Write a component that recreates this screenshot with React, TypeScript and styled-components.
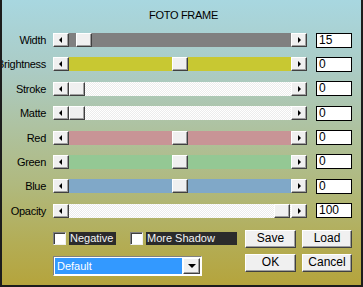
import React from "react";
import styled, { createGlobalStyle } from "styled-components";

const GlobalStyle = createGlobalStyle`
  html, body {
    margin: 0;
    padding: 0;
    background: #1a1a1a;
  }
  body {
    font-family: "Liberation Sans", Arial, sans-serif;
    font-size: 11px;
  }
`;

interface sliderProps {
  label: string;
  value: string;
  pos: number;
  track: string;
  dither?: boolean;
}

const sliders: sliderProps[] = [
  { label: "Width", value: "15", pos: 7, track: "#808080" },
  { label: "Brightness", value: "0", pos: 103, track: "#c8c832" },
  { label: "Stroke", value: "0", pos: 0, track: "#f6f6f6", dither: true },
  { label: "Matte", value: "0", pos: 0, track: "#f6f6f6", dither: true },
  { label: "Red", value: "0", pos: 103, track: "#c89496" },
  { label: "Green", value: "0", pos: 103, track: "#94c894" },
  { label: "Blue", value: "0", pos: 103, track: "#80a8c8" },
  { label: "Opacity", value: "100", pos: 205, track: "#f6f6f6", dither: true },
];

const App = () => {
  return (
    <>
      <GlobalStyle />
      <Frame>
        <Title>FOTO FRAME</Title>
        <Rows>
          {sliders.map((s) => (
            <Row key={s.label}>
              <Label>
                <span>{s.label}</span>
              </Label>
              <Scrollbar>
                <ArrowButton>
                  <LeftTri />
                </ArrowButton>
                <Track $color={s.track} $dither={!!s.dither}>
                  <Thumb style={{ marginLeft: s.pos }} />
                </Track>
                <ArrowButton>
                  <RightTri />
                </ArrowButton>
              </Scrollbar>
              <ValueBox>{s.value}</ValueBox>
            </Row>
          ))}
        </Rows>
        <Bottom>
          <LeftCol>
            <CheckRow>
              <CheckBox />
              <CheckLabel $width={46}>Negative</CheckLabel>
              <CheckBox $gap={14} />
              <CheckLabel $width={90}>More Shadow</CheckLabel>
            </CheckRow>
            <Combo>
              <ComboField>Default</ComboField>
              <ComboButton>
                <DownTri />
              </ComboButton>
            </Combo>
          </LeftCol>
          <Buttons>
            <PushButton>Save</PushButton>
            <PushButton>Load</PushButton>
            <PushButton>OK</PushButton>
            <PushButton>Cancel</PushButton>
          </Buttons>
        </Bottom>
      </Frame>
    </>
  );
};

export default App;

const Frame = styled.div`
  box-sizing: border-box;
  width: 363px;
  height: 287px;
  overflow: hidden;
  border-left: 2px solid #1c1c1c;
  border-right: 2px solid #1c1c1c;
  border-bottom: 2px solid #1c1c1c;
  padding-top: 9px;
  background: linear-gradient(
    180deg,
    #a8d7e0 0%,
    #abcbc4 25%,
    #aec2a0 45%,
    #b0b97e 65%,
    #b3ad56 85%,
    #b5a43c 100%
  );
  color: #000;
`;

const Title = styled.div`
  height: 13px;
  line-height: 13px;
  text-align: center;
  font-size: 11px;
  letter-spacing: -0.3px;
  padding-left: 4px;
`;

const Rows = styled.div`
  display: flex;
  flex-direction: column;
  gap: 10.4px;
  margin-top: 11px;
`;

const Row = styled.div`
  display: flex;
  align-items: center;
  height: 14px;
`;

const Label = styled.div`
  width: 44px;
  display: flex;
  justify-content: flex-end;
  white-space: nowrap;
  margin-right: 7px;
  line-height: 14px;
  letter-spacing: -0.3px;
`;

const Scrollbar = styled.div`
  display: flex;
  width: 254px;
  height: 14px;
`;

const raised = `
  box-sizing: border-box;
  background: #f0f0f0;
  border: 1px solid;
  border-color: #ffffff #404040 #404040 #ffffff;
  box-shadow: inset -1px -1px 0 #a0a0a0;
`;

const ArrowButton = styled.div`
  ${raised}
  width: 16px;
  height: 14px;
  display: flex;
  align-items: center;
  justify-content: center;
`;

const LeftTri = styled.div`
  width: 0;
  height: 0;
  border-top: 3px solid transparent;
  border-bottom: 3px solid transparent;
  border-right: 3px solid #000;
  margin-right: 1px;
`;

const RightTri = styled.div`
  width: 0;
  height: 0;
  border-top: 3px solid transparent;
  border-bottom: 3px solid transparent;
  border-left: 3px solid #000;
  margin-left: 1px;
`;

const Track = styled.div<{ $color: string; $dither: boolean }>`
  flex: 1;
  display: flex;
  height: 14px;
  background: ${(p) =>
    p.$dither
      ? "repeating-conic-gradient(#ffffff 0 25%, #ececec 0 50%) 0 0 / 2px 2px"
      : p.$color};
`;

const Thumb = styled.div`
  ${raised}
  width: 16px;
  height: 14px;
`;

const ValueBox = styled.div`
  box-sizing: border-box;
  width: 36px;
  height: 15px;
  margin-left: 9px;
  background: #fff;
  border: 1px solid #000;
  padding-left: 2px;
  font-size: 12px;
  line-height: 13px;
`;

const Bottom = styled.div`
  display: flex;
  margin-top: 12px;
`;

const LeftCol = styled.div`
  display: flex;
  flex-direction: column;
  width: 192px;
  margin-left: 51px;
  padding-top: 2px;
`;

const CheckRow = styled.div`
  display: flex;
  align-items: center;
  height: 13px;
`;

const CheckBox = styled.div<{ $gap?: number }>`
  box-sizing: border-box;
  width: 13px;
  height: 13px;
  margin-left: ${(p) => p.$gap ?? 0}px;
  background: #fff;
  border: 1px solid;
  border-color: #808080 #f0f0f0 #f0f0f0 #808080;
  box-shadow: inset 1px 1px 0 #404040;
`;

const CheckLabel = styled.div<{ $width: number }>`
  width: ${(p) => p.$width}px;
  height: 13px;
  margin-left: 3px;
  background: #2b2b2b;
  color: #f4f4f4;
  line-height: 13px;
  padding-left: 1px;
  white-space: nowrap;
  overflow: hidden;
`;

const Combo = styled.div`
  box-sizing: border-box;
  display: flex;
  width: 149px;
  height: 20px;
  margin-top: 11px;
  border: 1px solid;
  border-color: #808080 #ffffff #ffffff #808080;
  padding: 1px;
  background: #fff;
`;

const ComboField = styled.div`
  flex: 1;
  background: #3399ff;
  color: #fff;
  line-height: 16px;
  padding-left: 2px;
  margin-right: 1px;
`;

const ComboButton = styled.div`
  ${raised}
  width: 17px;
  height: 16px;
  display: flex;
  align-items: center;
  justify-content: center;
`;

const DownTri = styled.div`
  width: 0;
  height: 0;
  border-left: 4px solid transparent;
  border-right: 4px solid transparent;
  border-top: 4px solid #000;
  margin-top: 1px;
`;

const Buttons = styled.div`
  display: grid;
  grid-template-columns: 51px 50px;
  grid-auto-rows: 18px;
  column-gap: 6px;
  row-gap: 6px;
`;

const PushButton = styled.div`
  ${raised}
  display: flex;
  align-items: center;
  justify-content: center;
  font-size: 12px;
  padding-bottom: 1px;
`;
